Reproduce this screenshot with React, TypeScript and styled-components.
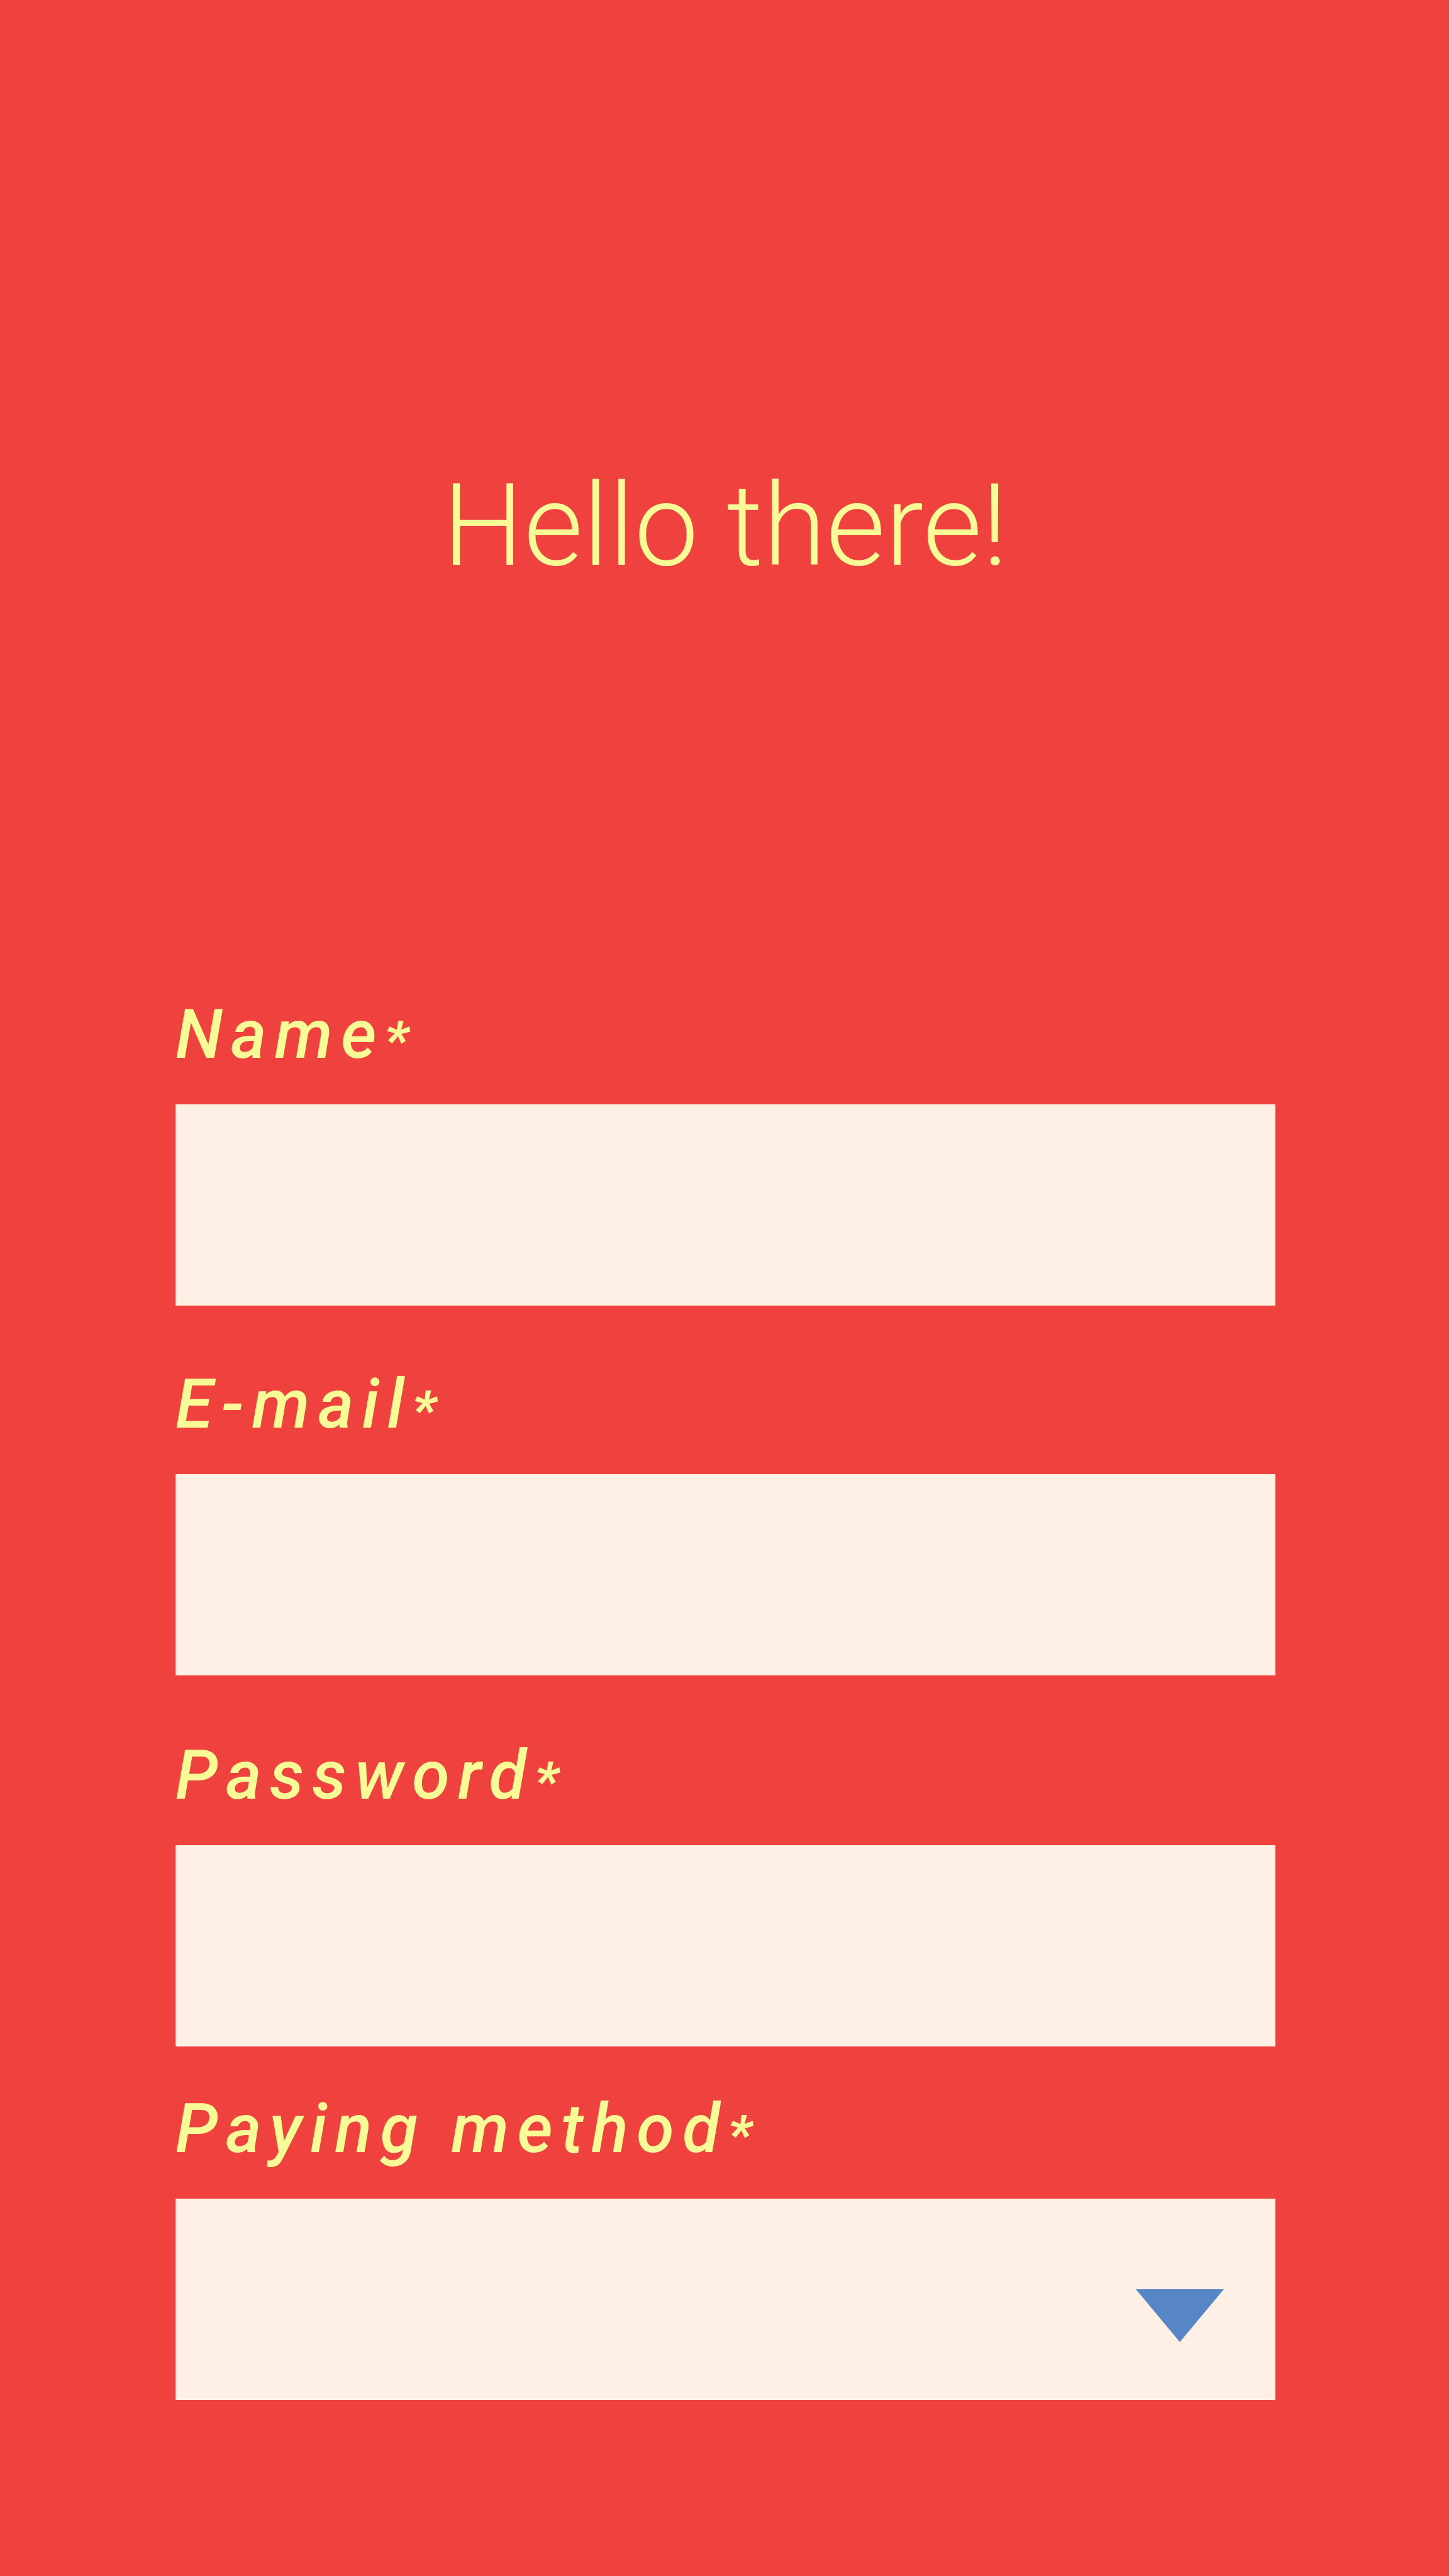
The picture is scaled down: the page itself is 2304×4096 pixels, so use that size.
import React from 'react';
import styled, { createGlobalStyle } from 'styled-components';

const GlobalStyle = createGlobalStyle`
  *, *::before, *::after { box-sizing: border-box; }
  body { margin: 0; background: #ef423e; font-family: Roboto, sans-serif; }
`;

const Page = styled.main`
  min-height: 100vh;
  padding: 726px 12% 0 12.1%;
  background: #ef423e;
  color: #f9fc96;
`;

const Title = styled.h1`
  margin: 0;
  font-size: 182px;
  line-height: 220px;
  font-weight: 300;
  text-align: center;
`;

const Form = styled.form`
  display: flex;
  flex-direction: column;
  padding-top: 628px;
`;

const Field = styled.div<{ $gap: number }>`
  display: flex;
  flex-direction: column;
  gap: 40px;
  margin-bottom: ${(p) => p.$gap}px;
`;

const Label = styled.label`
  font-size: 109px;
  line-height: 142px;
  font-weight: 500;
  font-style: italic;
  letter-spacing: 13px;
`;

const Star = styled.span`
  font-size: 84px;
  line-height: 1;
  font-weight: 900;
  letter-spacing: 0;
`;

const Input = styled.input`
  width: 100%;
  height: 320px;
  padding: 0 80px;
  border: 0;
  border-radius: 0;
  background: #fff0e5;
  color: #5786c7;
  font: 400 109px Roboto, sans-serif;
`;

const SelectBox = styled.div`
  display: grid;
  align-items: center;
  > * { grid-area: 1 / 1; }
`;

const Select = styled.select`
  width: 100%;
  height: 320px;
  padding: 0 260px 0 80px;
  border: 0;
  border-radius: 0;
  appearance: none;
  background: #fff0e5;
  color: #5786c7;
  font: 400 109px Roboto, sans-serif;
`;

const Arrow = styled.svg`
  width: 140px;
  height: 84px;
  justify-self: end;
  margin: 52px 82px 0 0;
  fill: #5786c7;
  pointer-events: none;
`;

const fields = [
  { id: 'name', label: 'Name', type: 'text', gap: 86 },
  { id: 'email', label: 'E-mail', type: 'email', gap: 88 },
  { id: 'password', label: 'Password', type: 'password', gap: 60 },
];

export default function App() {
  return (
    <>
      <GlobalStyle />
      <Page>
        <Title>Hello there!</Title>
        <Form>
          {fields.map((f) => (
            <Field key={f.id} $gap={f.gap}>
              <Label htmlFor={f.id}>{f.label}<Star>*</Star></Label>
              <Input id={f.id} name={f.id} type={f.type} required />
            </Field>
          ))}
          <Field $gap={0}>
            <Label htmlFor="method">Paying method<Star>*</Star></Label>
            <SelectBox>
              <Select id="method" name="method" required defaultValue="">
                <option value="" />
              </Select>
              <Arrow viewBox="0 0 140 84" aria-hidden="true"><path d="M0 0H140L70 84Z" /></Arrow>
            </SelectBox>
          </Field>
        </Form>
      </Page>
    </>
  );
}
